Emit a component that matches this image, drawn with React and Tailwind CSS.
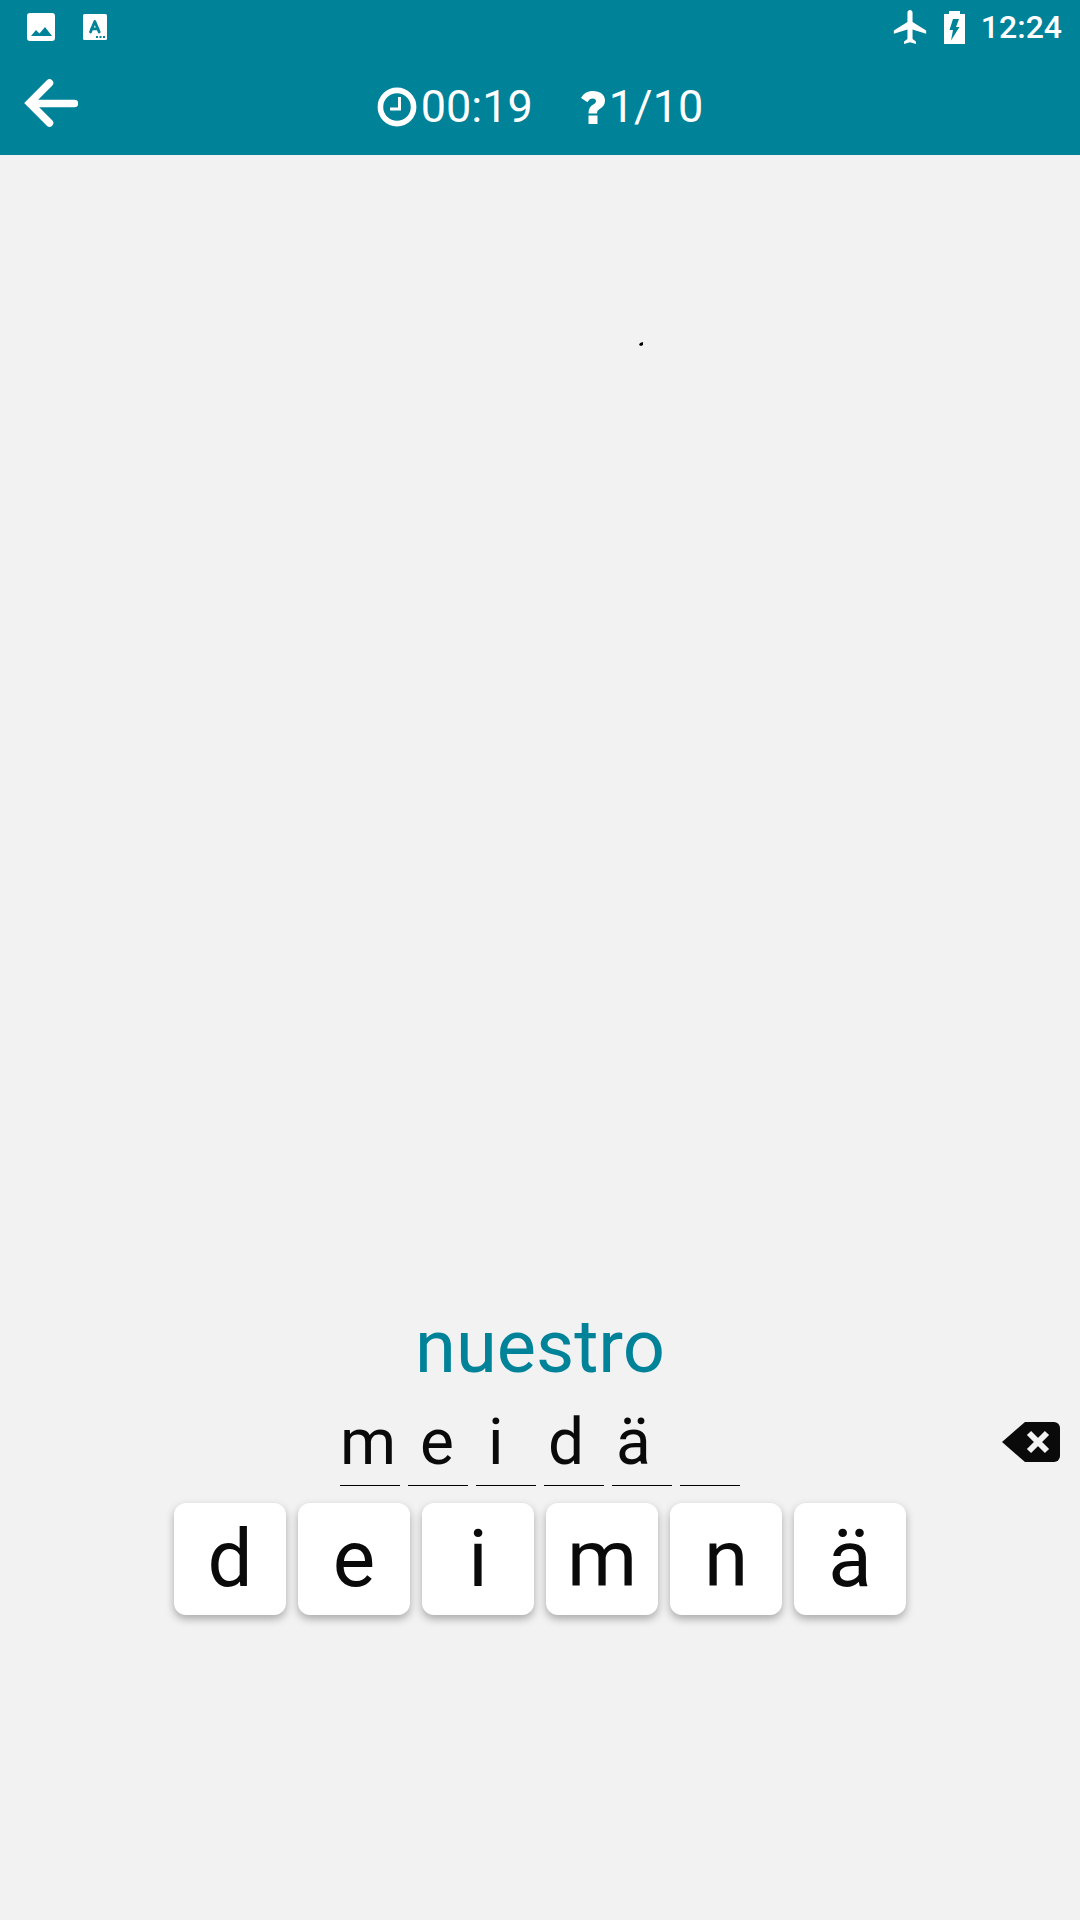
const answer = [
  { letter: "m", cell: "w-[80px]" },
  { letter: "e", cell: "w-[68px]" },
  { letter: "i", cell: "w-[60px]" },
  { letter: "d", cell: "w-[68px]" },
  { letter: "ä", cell: "w-[60px]" },
];
const letters = ["d", "e", "i", "m", "n", "ä"];

function PictureIcon() {
  return (
    <svg viewBox="0 0 28 28" className="size-7" fill="#fff" aria-hidden="true">
      <path
        fillRule="evenodd"
        d="M3 0h22a3 3 0 0 1 3 3v22a3 3 0 0 1-3 3H3a3 3 0 0 1-3-3V3a3 3 0 0 1 3-3zM4 23h21L18 14l-5.500 6.500L9 17z"
      />
    </svg>
  );
}

function LetterIcon() {
  return (
    <svg viewBox="0 0 24 26" className="h-[26px] w-6" aria-hidden="true">
      <rect width="24" height="26" rx="1.500" fill="#fff" />
      <path
        d="M7.500 18L11.800 7.500L16.200 18M8.500 14.800h6.600"
        fill="none"
        stroke="#008299"
        strokeWidth="2.800"
        strokeLinecap="round"
        strokeLinejoin="round"
      />
      <path d="M13 22h2v2h-2zM16.500 22h2v2h-2zM20 22h2v2h-2z" fill="#008299" />
    </svg>
  );
}

function PlaneIcon() {
  return (
    <svg viewBox="2 2 19 20" className="h-[34px] w-9" fill="#fff" aria-hidden="true">
      <path d="M21 16v-2l-8-5V3.500c0-.830-.670-1.500-1.500-1.500S10 2.670 10 3.500V9l-8 5v2l8-2.500V19l-2 1.500V22l3.500-1 3.500 1v-1.500L13 19v-5.500l8 2.500z" />
    </svg>
  );
}

function BatteryIcon() {
  return (
    <svg viewBox="0 0 21 33" className="h-[33px] w-[21px]" fill="#fff" aria-hidden="true">
      <path fillRule="evenodd" d="M5 0h11v3h5v30H0V3h5zM9 8L5.500 19H9L7 29.500L15.500 16H12l3-8z" />
    </svg>
  );
}

function BackIcon() {
  return (
    <svg viewBox="0 0 54 48" className="h-12 w-[54px]" fill="none" aria-hidden="true">
      <path
        d="M25.500 4L5.500 24l20 20M6 24.500h44.500"
        stroke="#fff"
        strokeWidth="7.500"
        strokeLinecap="round"
      />
    </svg>
  );
}

function ClockIcon() {
  return (
    <svg viewBox="0 0 40 40" className="size-10" fill="none" stroke="#fff" aria-hidden="true">
      <circle cx="20" cy="20" r="16.600" strokeWidth="5.600" />
      <path d="M22.500 10v12h-9.500" strokeWidth="3" />
    </svg>
  );
}

function QuestionIcon() {
  return (
    <svg viewBox="0 0 24 33" className="h-[33px] w-6" fill="#fff" aria-hidden="true">
      <path d="M0 7C2.500 2.500 6.500 0 12 0c7 0 12 3.800 12 9.500 0 4-2 6.300-5 8.200-2 1.300-2.800 2-3 4.800H7.500c0-4.500 1.500-7 4.700-9 2-1.200 2.800-2 2.800-3.500 0-1.600-1.300-2.500-3.300-2.500-2.200 0-3.600 1-5.200 3.800z" />
      <path d="M7.500 24.500h9V33h-9z" />
    </svg>
  );
}

function EraseIcon() {
  return (
    <svg viewBox="0 0 58 40" className="h-10 w-[58px]" aria-hidden="true">
      <path d="M23 0h29a6 6 0 0 1 6 6v28a6 6 0 0 1-6 6H23L0 20z" fill="#0a0a0a" />
      <path d="M27 11l18 18M45 11L27 29" stroke="#f2f2f2" strokeWidth="6" />
    </svg>
  );
}

function StatusBar() {
  return (
    <div className="flex h-[54px] items-center justify-between pr-[18px] pl-[27px]">
      <div className="flex items-center gap-7">
        <PictureIcon />
        <LetterIcon />
      </div>
      <div className="flex items-center gap-4">
        <PlaneIcon />
        <BatteryIcon />
        <span className="text-[32px] leading-10 font-medium">12:24</span>
      </div>
    </div>
  );
}

export default function App() {
  return (
    <div className="flex min-h-screen flex-col bg-[#f2f2f2] font-['Roboto',sans-serif] text-[#0a0a0a]">
      <header className="bg-[#008299] text-white">
        <StatusBar />
        <div className="grid h-[101px] grid-cols-[1fr_auto_1fr] items-start px-6">
          <button type="button" aria-label="Back" className="mt-[25px] w-[54px]">
            <BackIcon />
          </button>
          <div className="mt-[25px] flex gap-12 text-[45px] leading-[56px]">
            <span className="flex items-center gap-1">
              <ClockIcon />
              00:19
            </span>
            <span className="flex items-center gap-1">
              <QuestionIcon />
              1/10
            </span>
          </div>
        </div>
      </header>

      <main className="flex flex-1 flex-col pb-[305px]">
        {/* Drawing area */}
        <div className="flex flex-1">
          <svg className="w-full" aria-hidden="true">
            <path d="M639 190l1-2 3-1v3l-2 1z" fill="#000" />
          </svg>
        </div>

        <h1 className="text-center text-[74px] leading-[84px] text-[#008299]">nuestro</h1>

        <div className="grid grid-cols-[1fr_400px_1fr] items-center px-5">
          <div className="col-start-2 pt-3">
            <div className="flex text-[64px] leading-[84px]">
              {answer.map(({ letter, cell }) => (
                <span key={letter} className={cell}>
                  {letter}
                </span>
              ))}
            </div>
            <div className="flex gap-2">
              {letters.map((letter) => (
                <span key={letter} className="h-px flex-1 bg-black" />
              ))}
            </div>
          </div>
          <button type="button" aria-label="Erase" className="justify-self-end pt-2">
            <EraseIcon />
          </button>
        </div>

        <div className="mt-[17px] flex justify-center gap-3">
          {letters.map((letter) => (
            <button
              key={letter}
              type="button"
              className="size-28 rounded-xl bg-white text-[80px] leading-[112px] shadow-[0_4px_8px_rgba(0,0,0,0.3)]"
            >
              {letter}
            </button>
          ))}
        </div>
      </main>
    </div>
  );
}
